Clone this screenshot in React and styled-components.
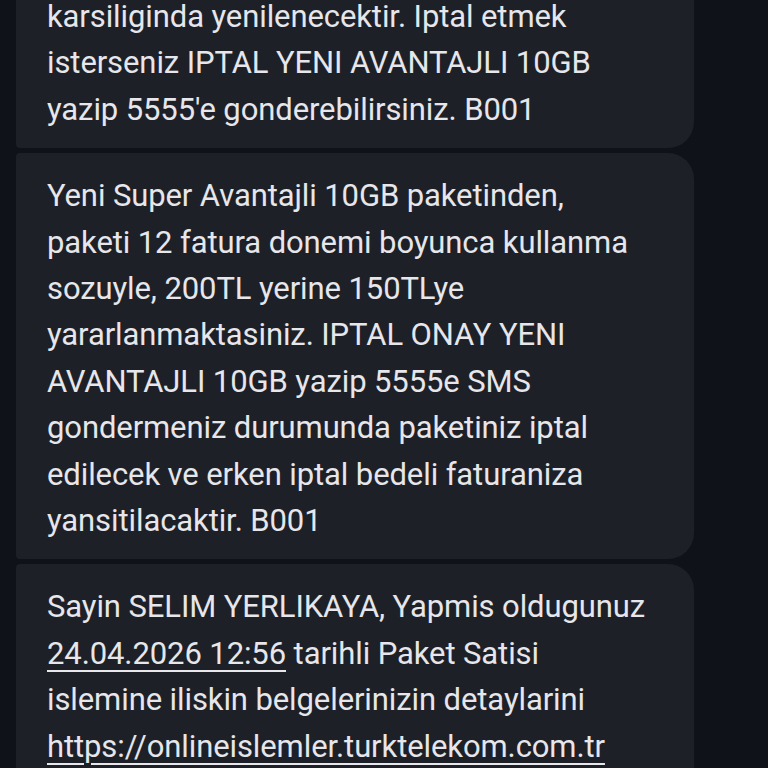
import React from "react";
import styled, { createGlobalStyle } from "styled-components";

const GlobalStyle = createGlobalStyle`
  html, body {
    margin: 0;
    padding: 0;
    background: #0f1218;
    overflow: hidden;
  }
`;

const Screen = styled.div`
  width: 768px;
  height: 768px;
  overflow: hidden;
  background: #0f1218;
  font-family: Roboto, "Noto Sans", sans-serif;
`;

const Thread = styled.div`
  display: flex;
  flex-direction: column;
  gap: 5px;
  margin-top: -26px;
  padding-left: 16px;
  width: 678px;
`;

const Bubble = styled.div`
  background: #1d2027;
  color: #e6e6eb;
  font-size: 31px;
  line-height: 46.4px;
  letter-spacing: -0.1px;
  padding: 20px 16px ${(p) => (p.$last ? "40px" : "15px")} 31px;
  border-radius: 4px 26px 26px 4px;
`;

const Underlined = styled.span`
  text-decoration: underline;
  text-decoration-thickness: 2px;
  text-underline-offset: 6px;
`;

const Line = styled.div`
  white-space: nowrap;
`;

const messages = [
  [
    "karsiliginda yenilenecektir. Iptal etmek",
    "isterseniz IPTAL YENI AVANTAJLI 10GB",
    "yazip 5555'e gonderebilirsiniz. B001",
  ],
  [
    "Yeni Super Avantajli 10GB paketinden,",
    "paketi 12 fatura donemi boyunca kullanma",
    "sozuyle, 200TL yerine 150TLye",
    "yararlanmaktasiniz. IPTAL ONAY YENI",
    "AVANTAJLI 10GB yazip 5555e SMS",
    "gondermeniz durumunda paketiniz iptal",
    "edilecek ve erken iptal bedeli faturaniza",
    "yansitilacaktir. B001",
  ],
];

export default function App() {
  return (
    <>
      <GlobalStyle />
      <Screen>
        <Thread>
          {messages.map((lines, i) => (
            <Bubble key={i}>
              {lines.map((l) => (
                <Line key={l}>{l}</Line>
              ))}
            </Bubble>
          ))}
          <Bubble $last>
            <Line>Sayin SELIM YERLIKAYA, Yapmis oldugunuz</Line>
            <Line>
              <Underlined>24.04.2026 12:56</Underlined> tarihli Paket Satisi
            </Line>
            <Line>islemine iliskin belgelerinizin detaylarini</Line>
            <Line>
              <Underlined>https://onlineislemler.turktelekom.com.tr</Underlined>
            </Line>
          </Bubble>
        </Thread>
      </Screen>
    </>
  );
}
